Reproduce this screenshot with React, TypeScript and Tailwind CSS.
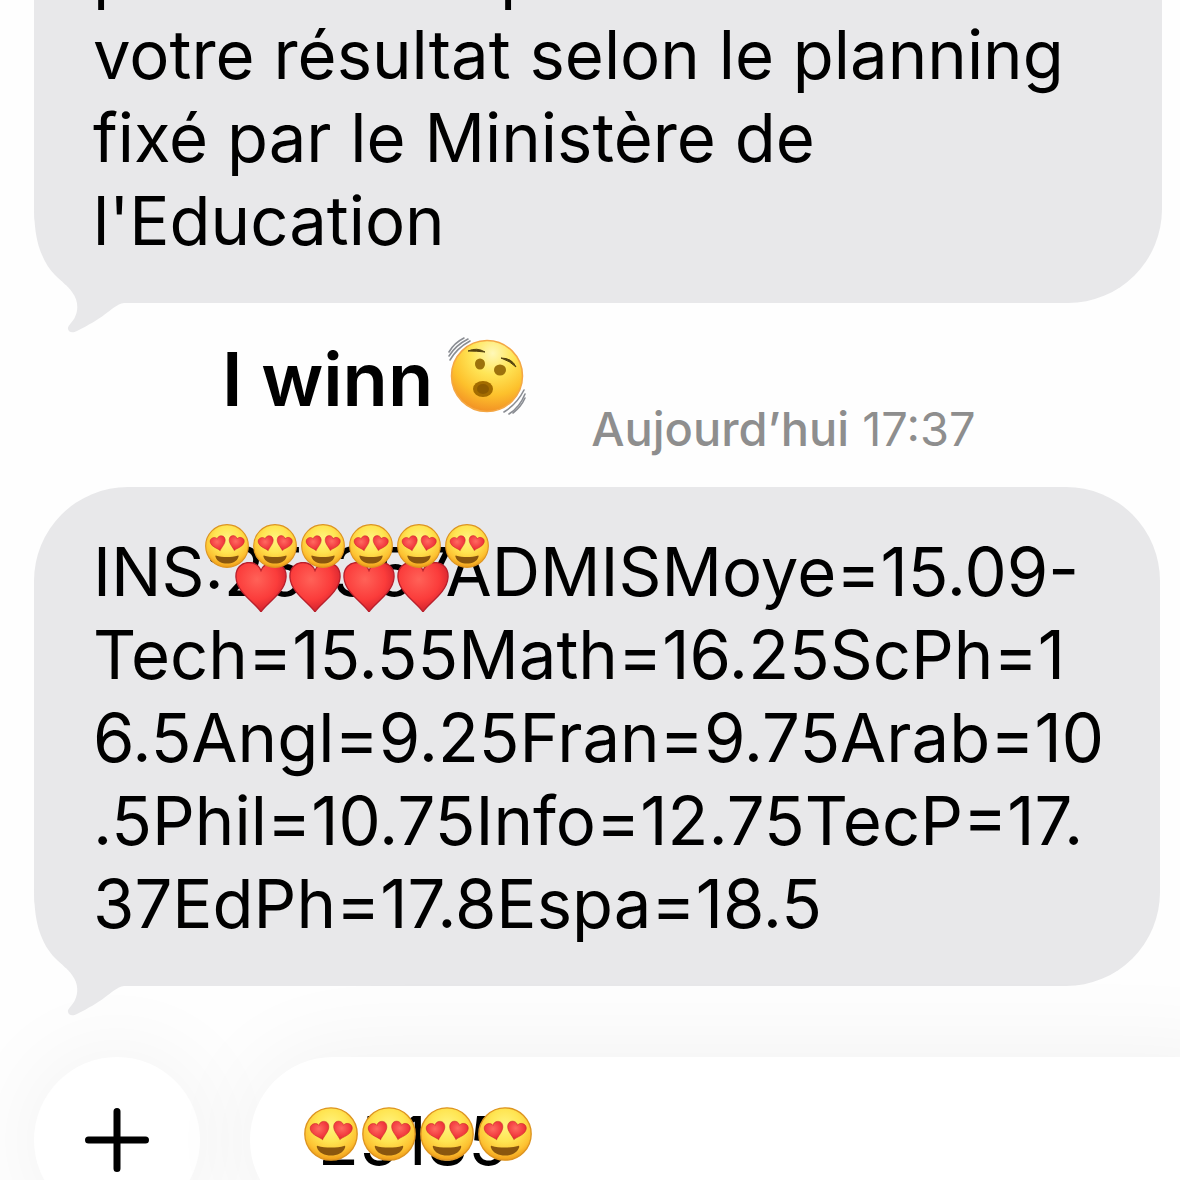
import { useId } from 'react'
import type { ReactNode } from 'react'

const RESULT_LINES = [
  'INS:251357ADMISMoye=15.09-',
  'Tech=15.55Math=16.25ScPh=1',
  '6.5Angl=9.25Fran=9.75Arab=10',
  '.5Phil=10.75Info=12.75TecP=17.',
  '37EdPh=17.8Espa=18.5',
]

const HEART =
  'M50 100 C42 84 4 62 2 32 C0 12 13 1 27 1 C38 1 46 7 50 17 C54 7 62 1 73 1 C87 1 100 12 98 32 C96 62 58 84 50 100Z'

function HeartEyes({ className }: { className: string }) {
  const id = useId()
  return (
    <svg viewBox="0 0 100 100" className={className} role="img" aria-label="😍">
      <defs>
        <radialGradient id={`${id}f`} cx="50%" cy="34%" r="68%">
          <stop offset="0" stopColor="#fff480" />
          <stop offset="0.45" stopColor="#ffe552" />
          <stop offset="0.78" stopColor="#fdc232" />
          <stop offset="1" stopColor="#ec9413" />
        </radialGradient>
        <radialGradient id={`${id}h`} cx="45%" cy="35%" r="70%">
          <stop offset="0" stopColor="#ff6a60" />
          <stop offset="0.7" stopColor="#f0353b" />
          <stop offset="1" stopColor="#c8202b" />
        </radialGradient>
      </defs>
      <circle cx="50" cy="50" r="48.5" fill={`url(#${id}f)`} stroke="#dd9420" strokeWidth="2.5" />
      <path d="M26 72 C38 76 62 76 74 72 C76 71 77 73 76 75 C70 95 30 95 24 75 C23 73 24 71 26 72Z" fill="#8a560e" />
      <g fill={`url(#${id}h)`} stroke="#c9252b" strokeWidth="3">
        <path d={HEART} transform="translate(9 33) rotate(-14) scale(.36 .33)" />
        <path d={HEART} transform="translate(57 24) rotate(14) scale(.36 .33)" />
      </g>
    </svg>
  )
}

function RedHeart() {
  const id = useId()
  return (
    <svg viewBox="0 0 100 100" preserveAspectRatio="none" className="h-[50px] w-[52px]" role="img" aria-label="❤️">
      <defs>
        <radialGradient id={id} cx="42%" cy="34%" r="68%">
          <stop offset="0" stopColor="#ff6258" />
          <stop offset="0.6" stopColor="#fb3c3b" />
          <stop offset="1" stopColor="#cf1f2b" />
        </radialGradient>
      </defs>
      <path d={HEART} fill={`url(#${id})`} stroke="#b81f2b" strokeWidth="2.5" />
    </svg>
  )
}

function ShakingFace() {
  return (
    <svg viewBox="0 0 80 80" className="size-20" role="img" aria-label="Shaking face">
      <defs>
        <radialGradient id="shake" cx="58%" cy="18%" r="84%">
          <stop offset="0" stopColor="#fff8b8" />
          <stop offset="0.35" stopColor="#ffe658" />
          <stop offset="0.7" stopColor="#fdc12c" />
          <stop offset="1" stopColor="#f28f24" />
        </radialGradient>
        <filter id="soft" x="-30%" y="-30%" width="160%" height="160%">
          <feGaussianBlur stdDeviation="0.7" />
        </filter>
      </defs>
      <g fill="none" stroke="#8a8d93" strokeWidth="1.6" strokeLinecap="round">
        <path d="M2 15 Q7 6 17 1" />
        <path d="M2 19 Q9 8 21 2" />
        <path d="M3 23 Q10 11 23 4" />
        <path d="M78 57 Q73 70 62 77" />
        <path d="M78 61 Q74 70 66 76" />
        <path d="M77 53 Q70 67 57 75" />
      </g>
      <circle cx="40" cy="39" r="35.5" fill="url(#shake)" stroke="#f4a744" strokeWidth="1.5" />
      <g filter="url(#soft)">
        <ellipse cx="33" cy="27" rx="5" ry="5.5" fill="#9c7208" />
        <ellipse cx="53" cy="33" rx="6" ry="5.5" fill="#9c7208" />
        <ellipse cx="36" cy="52" rx="10" ry="8" fill="#a36c06" />
        <ellipse cx="36" cy="52" rx="6" ry="5" fill="#8c5a05" />
        <path d="M21 14 Q30 10 38 15 Q30 14 21 14Z" fill="#54420f" stroke="#54420f" />
        <path d="M54 21 Q65 21 69 30 Q63 24 54 21Z" fill="#54420f" stroke="#54420f" />
      </g>
    </svg>
  )
}

function Bubble({ className, children }: { className: string; children: ReactNode }) {
  return (
    <div
      className={`relative rounded-[94px] bg-[#e8e8ea] pt-[43px] pr-10 pb-[41px] pl-[59px] text-[67px] leading-[83px] whitespace-nowrap ${className}`}
    >
      <svg viewBox="0 0 100 130" className="absolute -bottom-[30px] left-0 h-[130px] w-[100px]" aria-hidden="true">
        <path
          d="M0 0 C0 22 2 36 6 47 C10 58 15 66 21 72 C28 79 34 83 38 89 C45 98 44 108 41 114 C39 119 33 123 34 126 C35 130 39 130 43 128 C55 122 63 117 70 112 C77 107 83 101 90 100 L100 100 L100 0Z"
          fill="#e8e8ea"
        />
      </svg>
      <div className="relative">{children}</div>
    </div>
  )
}

export default function App() {
  return (
    <main className="flex h-screen flex-col overflow-hidden bg-[#fefefe] font-['Inter','Liberation_Sans',sans-serif] text-black">
      <Bubble className="-mt-[113px] mr-[18px] ml-[34px] shrink-0">
        <p className="flex gap-[366px]">
          <span>p</span>
          <span>p</span>
        </p>
        <p>votre résultat selon le planning</p>
        <p>fixé par le Ministère de</p>
        <p>l'Education</p>
      </Bubble>

      <div className="flex h-[184px] shrink-0 items-start pt-[34px] pl-[222px]">
        <h1 className="text-[74px] leading-[84px] font-semibold whitespace-nowrap">I winn</h1>
        <div className="ml-[14px]">
          <ShakingFace />
        </div>
        <p className="mt-16 ml-16 text-[47px] leading-[56px] whitespace-nowrap text-[#8e8e8e]">
          <span className="font-medium">Aujourd’hui</span> <time>17:37</time>
        </p>
      </div>

      <Bubble className="mr-5 ml-[34px] shrink-0">
        {RESULT_LINES.map(line => (
          <p key={line}>{line}</p>
        ))}
        {/* stickers that hide the registration number */}
        <div className="absolute top-8 left-[142px] flex gap-[2px]">
          {[0, 1, 2, 3].map(i => (
            <RedHeart key={i} />
          ))}
        </div>
        <div className="absolute -top-[6px] left-28 flex gap-1">
          {[0, 1, 2, 3, 4, 5].map(i => (
            <HeartEyes key={i} className="size-11" />
          ))}
        </div>
      </Bubble>

      <form className="mt-[71px] flex shrink-0 items-start gap-[50px] pl-[34px]">
        <button
          type="button"
          aria-label="Ajouter"
          className="flex size-[166px] shrink-0 items-center justify-center rounded-full bg-white shadow-[0_0_100px_rgba(0,0,0,0.06)]"
        >
          <svg viewBox="0 0 64 64" className="size-16" aria-hidden="true">
            <path d="M32 3.5V60.5M3.5 32H60.5" stroke="#000" strokeWidth="7" strokeLinecap="round" />
          </svg>
        </button>
        <div className="relative -mr-24 h-[166px] flex-1 rounded-full bg-white shadow-[0_0_100px_rgba(0,0,0,0.06)]">
          <input
            type="text"
            aria-label="Message"
            defaultValue="25185"
            className="h-full w-full rounded-full bg-transparent pl-[68px] text-[67px] outline-none"
          />
          <div className="pointer-events-none absolute top-[50px] left-[54px] flex gap-1">
            {[0, 1, 2, 3].map(i => (
              <HeartEyes key={i} className="size-[54px]" />
            ))}
          </div>
        </div>
      </form>
    </main>
  )
}
